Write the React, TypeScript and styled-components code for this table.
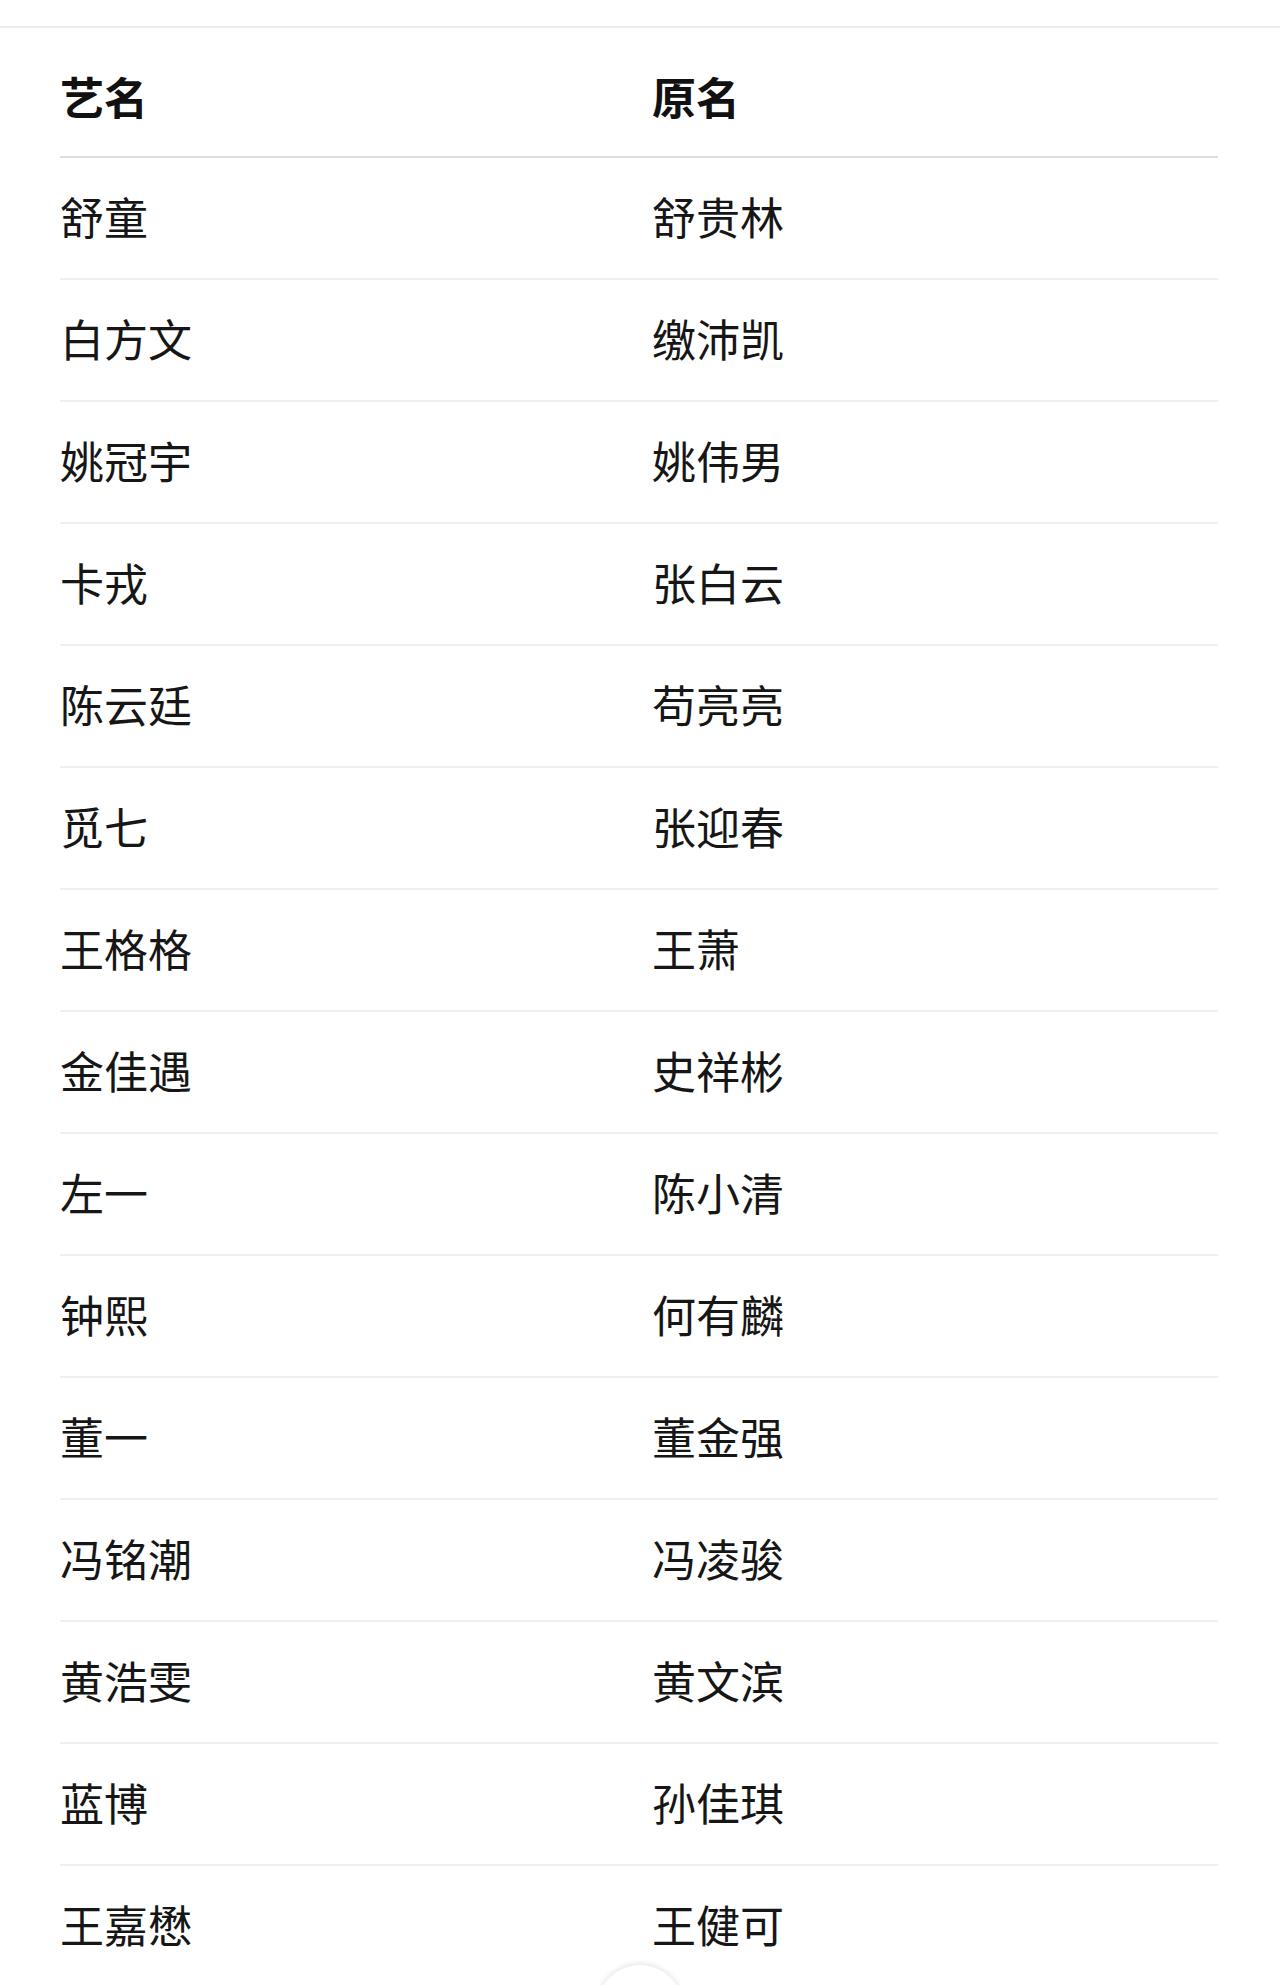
import React, { FC } from "react";
import styled, { createGlobalStyle } from "styled-components";

const GlobalStyle = createGlobalStyle`
  html, body {
    margin: 0;
    padding: 0;
    background: #fff;
  }
  body {
    font-family: "Noto Sans CJK SC", "Noto Sans", sans-serif;
    color: #141414;
  }
`;

const Page = styled.div`
  position: relative;
  height: 1985px;
  overflow: hidden;
  padding-top: 26px;
  box-sizing: border-box;
`;

const TopRule = styled.div`
  height: 2px;
  background: #ececec;
`;

const Table = styled.div`
  margin: 0 62px 0 60px;
`;

const Row = styled.div<{ $head?: boolean }>`
  display: grid;
  grid-template-columns: 592px 1fr;
  align-items: center;
  box-sizing: border-box;
  height: ${(p) => (p.$head ? "130px" : "122px")};
  padding: ${(p) => (p.$head ? "7px 0 0" : "0 0 4px")};
  border-bottom: 2px solid ${(p) => (p.$head ? "#dedede" : "#efefef")};
`;

const Cell = styled.div<{ $head?: boolean }>`
  font-size: 44px;
  line-height: 1;
  font-weight: ${(p) => (p.$head ? 700 : 400)};
  color: ${(p) => (p.$head ? "#111" : "#161616")};
  white-space: nowrap;
`;

const FloatButton = styled.div`
  position: absolute;
  left: 597px;
  top: 1965px;
  width: 86px;
  height: 86px;
  border-radius: 50%;
  background: #fff;
  box-shadow: 0 -1px 6px rgba(0, 0, 0, 0.12);
`;

const names: [string, string][] = [
  ["舒童", "舒贵林"],
  ["白方文", "缴沛凯"],
  ["姚冠宇", "姚伟男"],
  ["卡戎", "张白云"],
  ["陈云廷", "苟亮亮"],
  ["觅七", "张迎春"],
  ["王格格", "王萧"],
  ["金佳遇", "史祥彬"],
  ["左一", "陈小清"],
  ["钟熙", "何有麟"],
  ["董一", "董金强"],
  ["冯铭潮", "冯凌骏"],
  ["黄浩雯", "黄文滨"],
  ["蓝博", "孙佳琪"],
  ["王嘉懋", "王健可"],
];

const App: FC = () => {
  return (
    <>
      <GlobalStyle />
      <Page>
        <TopRule />
        <Table>
          <Row $head>
            <Cell $head>艺名</Cell>
            <Cell $head>原名</Cell>
          </Row>
          {names.map(([stage, real]) => (
            <Row key={stage}>
              <Cell>{stage}</Cell>
              <Cell>{real}</Cell>
            </Row>
          ))}
        </Table>
        <FloatButton />
      </Page>
    </>
  );
};

export default App;
